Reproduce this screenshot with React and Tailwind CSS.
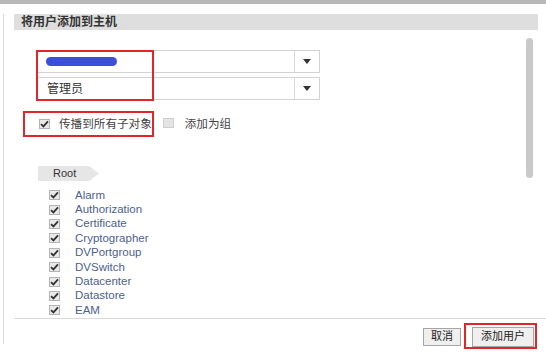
import React from "react";

const CJK = { fontFamily: '"Liberation Sans","Noto Sans CJK SC",sans-serif' };

function Check({ checked = true }) {
  return (
    <span className={`inline-flex w-[11px] h-[10px] items-center justify-center border ${checked ? "border-[#b4b4b4] bg-[#e9e9e9]" : "border-[#cfcfcf] bg-[#e4e4e4]"}`}>
      {checked && (
        <svg width="9" height="8" viewBox="0 0 9 8">
          <path d="M1 4.2 L3.4 6.4 L8 1.4" stroke="#333" strokeWidth="1.8" fill="none" />
        </svg>
      )}
    </span>
  );
}

function Select({ children }) {
  return (
    <div className="flex w-[283px] h-[23px] border border-[#d2d2d2] bg-white">
      <div className="flex-1 flex items-center pl-[9px] text-[12px] text-[#333]">{children}</div>
      <div className="w-[25px] border-l border-[#d9d9d9] flex items-center justify-center">
        <svg width="8" height="5" viewBox="0 0 8 5"><path d="M0 0 H8 L4 5 Z" fill="#333" /></svg>
      </div>
    </div>
  );
}

const items = ["Alarm","Authorization","Certificate","Cryptographer","DVPortgroup","DVSwitch","Datacenter","Datastore","EAM"];

export default function App() {
  return (
    <div className="relative w-[546px] h-[353px] bg-white overflow-hidden" style={CJK}>
      <div className="h-[4px] bg-[#b8b8b8]" />
      <div className="ml-[3px] mt-[10px] border-l border-[#dcdcdc] h-[330px] flex flex-col">
        <div className="ml-[10px] mr-[8px] h-[16px] bg-[#dedede] flex items-center pl-[7px] text-[12px] font-bold text-[#333]">
          将用户添加到主机
        </div>
        <div className="relative h-[288px]">
          <div className="absolute left-[522px] top-[8px] w-[7px] h-[140px] rounded-full bg-[#c9c9c9]" />
          <div className="pl-[33px] pt-[20px] flex flex-col gap-[4px]">
            <Select>
              <span className="block w-[71px] h-[9px] rounded-full bg-[#3d4fd6] -ml-[1px]" />
            </Select>
            <Select>管理员</Select>
          </div>
          <div className="flex items-center pl-[35px] mt-[17px] h-[14px] text-[11.6px] text-[#444]">
            <Check />
            <span className="ml-[9px]">传播到所有子对象</span>
            <span className="ml-[11px]"><Check checked={false} /></span>
            <span className="ml-[11px]">添加为组</span>
          </div>
          <div className="ml-[34px] mt-[35px] w-[61px] h-[15px] bg-[#e6e6e6] [clip-path:polygon(0_0,84%_0,100%_50%,84%_100%,0_100%)] flex items-center pl-[15px] text-[11px] text-[#333]">
            Root
          </div>
          <div className="mt-[7px] flex flex-col">
            {items.map((t) => (
              <div key={t} className="flex items-center h-[14.4px] pl-[45px]">
                <Check />
                <span className="ml-[15px] text-[11.5px] leading-[13px] text-[#4d6190]">{t}</span>
              </div>
            ))}
          </div>
        </div>
        <div className="ml-[10px] border-t border-[#dadada] flex justify-end items-center pt-[8px] pr-[12px] gap-[11px] text-[11px] text-[#222]">
          <button className="h-[18px] w-[38px] border border-[#a5a5a5] bg-[#efefef] flex items-center justify-center">取消</button>
          <button className="h-[20px] w-[62px] border border-[#a5a5a5] bg-[#efefef] flex items-center justify-center">添加用户</button>
        </div>
      </div>
      <div className="absolute left-[36px] top-[50px] w-[118px] h-[51px] border-2 border-[#e0252b]" />
      <div className="absolute left-[23px] top-[111px] w-[131px] h-[26px] border-2 border-[#e0252b]" />
      <div className="absolute left-[464px] top-[323px] w-[73px] h-[26px] border-2 border-[#e0252b]" />
    </div>
  );
}
